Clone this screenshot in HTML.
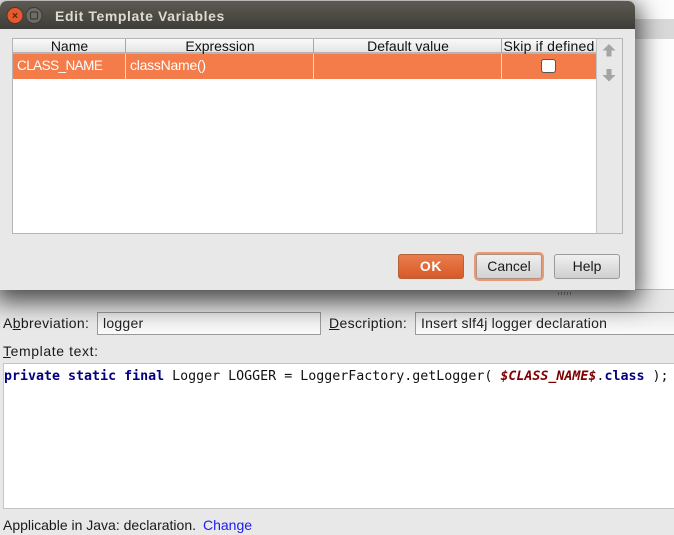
<!DOCTYPE html>
<html>
<head>
<meta charset="utf-8">
<style>
html,body{margin:0;padding:0}
body{width:674px;height:535px;position:relative;overflow:hidden;background:#e8e8e8;font-family:"Liberation Sans",sans-serif;font-size:14px;color:#1a1a1a}
.a{position:absolute;white-space:nowrap}
.bg-top{left:0;top:0;width:674px;height:290px;background:#fdfdfd}
.band{left:0;top:19px;width:674px;height:20px;background:#d9d9d9}
.low{left:0;top:290px;width:674px;height:245px;background:#e8e8e8}
.dlg{left:0;top:1px;width:635px;height:289px;background:#e8e8e8;border-radius:7px 7px 0 0;box-shadow:0 7px 24px 5px rgba(0,0,0,.68);overflow:hidden}
.title{left:0;top:0;width:635px;height:28px;background:linear-gradient(#5c5a52,#3e3d38)}
.ttxt{left:55px;top:7px;font-weight:bold;color:#dfdbd2;font-size:14px;letter-spacing:.6px}
.tbl{left:12px;top:37px;width:611px;height:196px;background:#fff;border:1px solid #b5b5b5;box-sizing:border-box}
.hd{top:0;height:13px;background:linear-gradient(#fafafa,#e4e4e4);border-bottom:2px solid #b5b5b5;text-align:center;line-height:15px;color:#111;font-size:14px}
.sep{top:0;width:1px;height:14px;background:#a8a8a8}
.row{left:0;top:15px;width:583px;height:25px;background:#f47b4a}
.cell{top:18px;color:#fff;font-size:14px}
.vs{top:15px;width:1px;height:25px;background:#fbd9ca}
.side{left:583px;top:0;width:26px;height:194px;background:#e8e8e8;border-left:1px solid #c4c4c4;box-sizing:border-box}
.btn{top:253px;width:66px;height:25px;box-sizing:border-box;border:1px solid #9a9a9a;border-radius:3px;text-align:center;line-height:23px;font-size:14px;background:linear-gradient(#f0f0f0,#cfcfcf);color:#1a1a1a}
.inp{height:23px;box-sizing:border-box;border:1px solid #9a9a9a;background:linear-gradient(#e9e9e9,#fafafa);line-height:21px;padding-left:5px;font-size:14px;color:#222}
.lbl{font-size:14px;color:#1a1a1a}
u{text-decoration:underline}
.code{left:3px;top:363px;width:671px;height:146px;box-sizing:border-box;background:#fff;border:1px solid #c4c4c4;border-right:none}
.ct{left:4px;top:368px;font-family:"DejaVu Sans Mono",monospace;font-size:13.3px;color:#111;line-height:18px}
.k{color:#000080;font-weight:bold}
.v{color:#7f0000;font-weight:bold;font-style:italic}
</style>
</head>
<body>
<div class="a bg-top"></div>
<div class="a band"></div>
<div class="a low"></div>
<div class="a" style="left:0;top:289px;width:674px;height:1px;background:#bdbdbd"></div>

<div class="a" style="left:558px;top:292px;width:15px;height:3px;background:repeating-linear-gradient(90deg,#999 0 1px,transparent 1px 3px)"></div>

<div class="a lbl" style="left:3px;top:315px;letter-spacing:.35px">A<u>b</u>breviation:</div>
<div class="a inp" style="left:97px;top:312px;width:224px;letter-spacing:.25px">logger</div>
<div class="a lbl" style="left:329px;top:315px;letter-spacing:.35px"><u>D</u>escription:</div>
<div class="a inp" style="left:415px;top:312px;width:262px;letter-spacing:.23px">Insert slf4j logger declaration</div>
<div class="a lbl" style="left:3px;top:343px;letter-spacing:.6px"><u>T</u>emplate text:</div>

<div class="a code"></div>
<div class="a ct"><span class="k">private static final</span> Logger LOGGER = LoggerFactory.getLogger( <span class="v">$CLASS_NAME$</span>.<span class="k">class</span> );</div>

<div class="a lbl" style="left:3px;top:517px">Applicable in Java: declaration.</div>
<div class="a lbl" style="left:203px;top:517px;color:#1c1cf0">Change</div>

<div class="a dlg">
  <div class="a title"></div>
  <svg class="a" style="left:0;top:0" width="54" height="28">
    <circle cx="15" cy="14.500" r="8" fill="#e9582c" stroke="#4a3a30" stroke-width="1"/>
    <path d="M12.800 12.300l4.400 4.400M17.200 12.300l-4.400 4.400" stroke="#4a2a18" stroke-width="1.200"/>
    <circle cx="34" cy="14.500" r="8" fill="#6e6d67" stroke="#3c3b36" stroke-width="1"/>
    <rect x="30.500" y="11" width="7" height="7" rx="1" fill="none" stroke="#3c3b36" stroke-width="1.200"/>
  </svg>
  <div class="a ttxt">Edit Template Variables</div>

  <div class="a tbl">
    <div class="a hd" style="left:0;width:113px">Name</div>
    <div class="a hd" style="left:113px;width:188px">Expression</div>
    <div class="a hd" style="left:301px;width:188px">Default value</div>
    <div class="a hd" style="left:489px;width:94px;letter-spacing:.2px">Skip if defined</div>
    <div class="a sep" style="left:112px"></div>
    <div class="a sep" style="left:300px"></div>
    <div class="a sep" style="left:488px"></div>
    <div class="a row"></div>
    <div class="a vs" style="left:112px"></div>
    <div class="a vs" style="left:300px"></div>
    <div class="a vs" style="left:488px"></div>
    <div class="a cell" style="left:4px;font-size:13.500px;letter-spacing:-.55px;top:19px">CLASS_NAME</div>
    <div class="a cell" style="left:117px;letter-spacing:-.25px">className()</div>
    <div class="a" style="left:528px;top:20px;width:15px;height:14px;box-sizing:border-box;background:#fff;border:1px solid #555;border-radius:3px"></div>
    <div class="a side">
      <svg class="a" style="left:0;top:0" width="24" height="60">
        <path d="M12 5l6.500 6.500h-4v6h-5v-6h-4z" fill="#a4a4a4"/>
        <path d="M9.500 30h5v6h4l-6.500 6.500-6.500-6.500h4z" fill="#a4a4a4"/>
      </svg>
    </div>
  </div>

  <div class="a btn" style="left:398px;background:linear-gradient(#ea7d4d,#d75a28);border-color:#b5623c;color:#fff;font-weight:bold;letter-spacing:.6px">OK</div>
  <div class="a btn" style="left:476px;background:linear-gradient(#efefef,#d2d2d2);border:1px solid #b0907f;box-shadow:0 0 0 2px #e59a78">Cancel</div>
  <div class="a btn" style="left:554px">Help</div>
</div>
</body>
</html>
